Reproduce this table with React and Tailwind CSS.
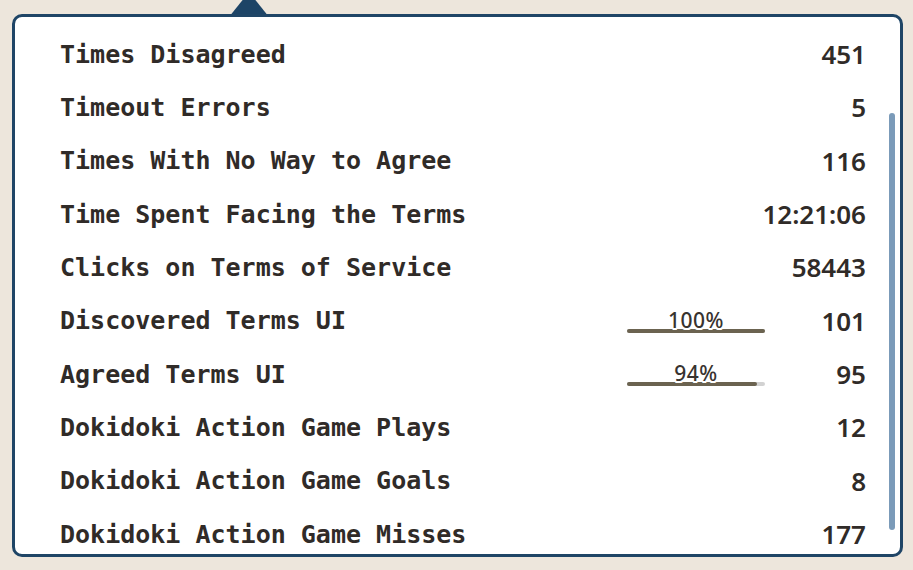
import React from "react";

const rows = [
  { label: "Times Disagreed", value: "451" },
  { label: "Timeout Errors", value: "5" },
  { label: "Times With No Way to Agree", value: "116" },
  { label: "Time Spent Facing the Terms", value: "12:21:06" },
  { label: "Clicks on Terms of Service", value: "58443" },
  { label: "Discovered Terms UI", value: "101", pct: 100 },
  { label: "Agreed Terms UI", value: "95", pct: 94 },
  { label: "Dokidoki Action Game Plays", value: "12" },
  { label: "Dokidoki Action Game Goals", value: "8" },
  { label: "Dokidoki Action Game Misses", value: "177" },
];

function Bar({ pct }) {
  return (
    <div className="relative w-[138px] h-[30px] mt-[-2px]">
      <div className="absolute left-0 right-0 bottom-[2px] h-[4px] rounded-full bg-[#d2d2d2]">
        <div className="h-full rounded-full bg-[#6b6350]" style={{ width: pct + "%" }} />
      </div>
      <div
        className="absolute left-0 right-0 bottom-[4px] text-center text-[21px] leading-none font-medium tracking-[0.5px] text-[#38332f] [font-family:'Noto_Sans',sans-serif]"
        style={{ textShadow: "0 2px 0 #fff, 1px 2px 0 #fff, -1px 2px 0 #fff" }}
      >
        {pct}%
      </div>
    </div>
  );
}

export default function App() {
  return (
    <div className="w-[913px] h-[570px] bg-[#ede6dc] pt-[14px] pl-[12px] overflow-hidden">
      <div className="relative w-[891px] h-[543px]">
        {/* pointer */}
        <svg className="absolute left-[216px] top-[-22px]" width="42" height="26" viewBox="0 0 42 26">
          <polygon points="21,0 41,25 1,25" fill="#1d4466" />
        </svg>
        <div className="relative w-full h-full rounded-[10px] border-[3px] border-[#1f4566] bg-white overflow-hidden">
          <div className="flex flex-col pt-[11px] pl-[45px] pr-[34px]">
            {rows.map((r) => (
              <div key={r.label} className="flex items-center h-[53.3px] shrink-0">
                <div className="flex-1 text-[25px] font-bold text-[#302b28] [font-family:'DejaVu_Sans_Mono',monospace] whitespace-nowrap">
                  {r.label}
                </div>
                {r.pct != null && <Bar pct={r.pct} />}
                <div
                  className={
                    (r.pct != null ? "w-[101px] " : "") +
                    "text-right text-[26px] font-semibold text-[#302b28] [font-family:'Noto_Sans',sans-serif] whitespace-nowrap"
                  }
                >
                  {r.value}
                </div>
              </div>
            ))}
          </div>
          {/* scrollbar */}
          <div className="absolute right-[5px] top-[96px] w-[6px] h-[417px] rounded-full bg-[#7b9bb9]" />
        </div>
      </div>
    </div>
  );
}
